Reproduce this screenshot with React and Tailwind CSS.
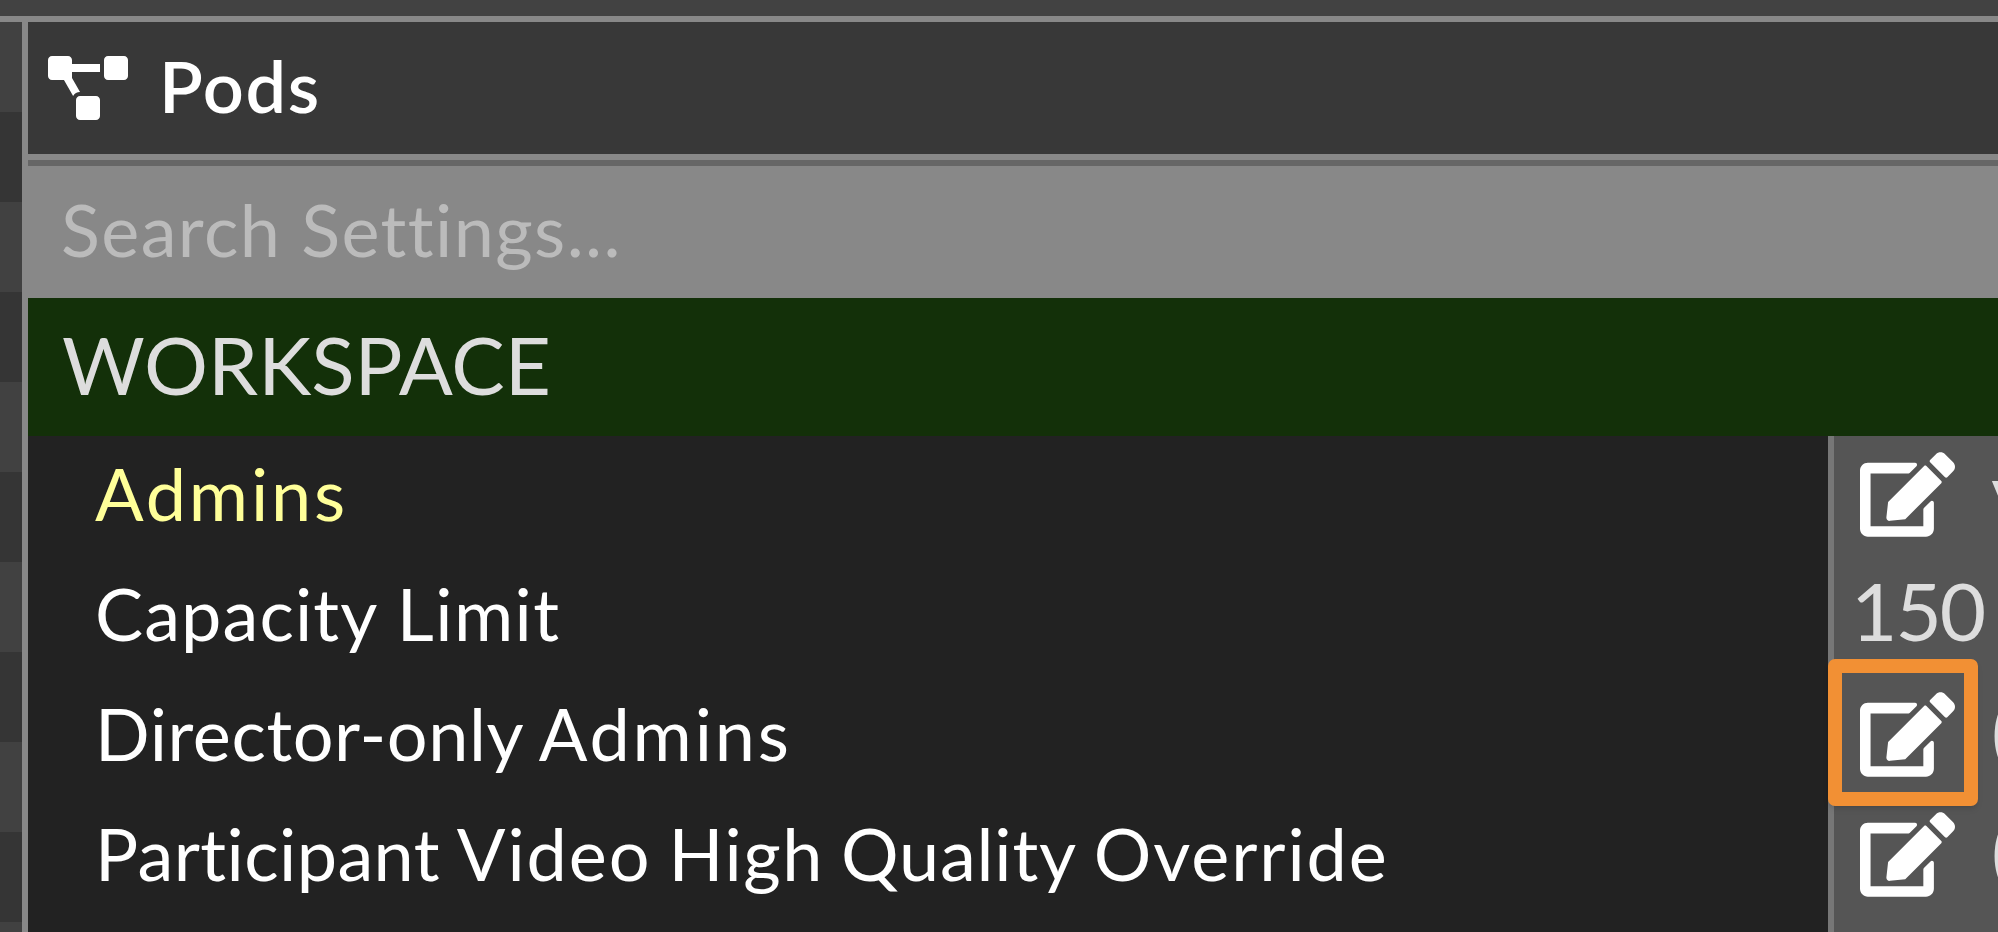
import React from 'react';
import { FaEdit, FaProjectDiagram } from 'react-icons/fa';

const settings = [
    {
        id: 'admins',
        value: 'v',
        editable: true,
        color: 'text-[#ffff99]',
        words: [{ text: 'Admins', tracking: 'tracking-[2.8px]' }],
    },
    {
        id: 'capacity',
        value: '150',
        color: 'text-white',
        words: [
            { text: 'Capacity', tracking: 'tracking-[1.1px]' },
            { text: 'Limit', tracking: 'tracking-[1.4px]' },
        ],
    },
    {
        id: 'director',
        value: '(',
        editable: true,
        highlighted: true,
        color: 'text-white [word-spacing:-4px]',
        words: [
            { text: 'Director-only', tracking: 'tracking-[0.6px]' },
            { text: 'Admins', tracking: 'tracking-[2.8px]' },
        ],
    },
    {
        id: 'override',
        value: '(',
        editable: true,
        color: 'text-white [word-spacing:-1.5px]',
        words: [
            { text: 'Participant', tracking: 'tracking-[0.4px]' },
            { text: 'Video', tracking: 'tracking-[1.9px]' },
            { text: 'High', tracking: 'tracking-[1.6px]' },
            { text: 'Quality', tracking: 'tracking-[0.8px]' },
            { text: 'Override', tracking: 'tracking-[1.9px]' },
        ],
    },
];

const SettingLabel = ({ words, color }) => (
    <span className={`ml-[67px] whitespace-nowrap text-[72px] leading-[114px] ${color}`}>
        {words.map((word, i) => (
            <React.Fragment key={word.text}>
                {i > 0 && ' '}
                <span className={word.tracking}>{word.text}</span>
            </React.Fragment>
        ))}
    </span>
);

const SettingRow = ({ setting }) => (
    <div className="flex h-[120px] shrink-0">
        <div className="flex w-[1800px] shrink-0 items-start bg-[#222222]">
            <SettingLabel words={setting.words} color={setting.color} />
        </div>
        <div className="relative flex flex-1 items-start border-l-[6px] border-[#777777] bg-[#555555]">
            {setting.editable && <FaEdit className="ml-[26px] mt-4 h-[85px] w-[95px] shrink-0 text-white" />}
            <span className={`whitespace-nowrap text-[80px] leading-[108px] text-[#dddddd] ${setting.editable ? 'ml-[36px]' : 'ml-[17px] tracking-[-2px]'}`}>
                {setting.value}
            </span>
            {setting.highlighted && (
                <div className="absolute -left-[6px] -top-[17px] z-10 h-[147px] w-[150px] rounded-[7px] border-[14px] border-[#f29034] shadow-md" />
            )}
        </div>
    </div>
);

const Sidebar = () => (
    <div className="w-[22px] shrink-0 bg-[#414141] pt-[90px]">
        {[0, 1, 2, 3, 4].map(stripe => (
            <div key={stripe} className="mb-[90px] h-[90px] bg-[#353535]" />
        ))}
    </div>
);

const App = () => (
    <div className="flex h-[932px] w-[1998px] flex-col overflow-hidden bg-[#424242] pt-4 font-['Lato',sans-serif]">
        <div className="flex min-h-0 flex-1 border-t-[6px] border-[#888888]">
            <Sidebar />
            <div className="flex min-w-0 flex-1 flex-col overflow-hidden border-l-[6px] border-[#888888]">
                <div className="flex h-[138px] shrink-0 items-start border-b-[6px] border-[#888888] bg-[#383838]">
                    <FaProjectDiagram className="ml-5 mt-[34px] h-16 w-20 text-white" />
                    <h1 className="ml-[31px] text-[72px] font-semibold leading-[126px] tracking-[1.6px] text-white">Pods</h1>
                </div>
                <div className="flex h-[138px] shrink-0 border-t-[6px] border-[#666666] bg-[#888888]">
                    <span className="ml-[33px] text-[72px] leading-[126px] tracking-[1.4px] text-[#bbbbbb]">Search Settings...</span>
                </div>
                <div className="flex h-[138px] shrink-0 bg-[#133009]">
                    <span className="ml-[34px] text-[80px] leading-[132px] text-[#dddddd]">WORKSPACE</span>
                </div>
                {settings.map(setting => (
                    <SettingRow key={setting.id} setting={setting} />
                ))}
                {/* columns continue below the last setting */}
                <div className="flex flex-1">
                    <div className="w-[1800px] shrink-0 bg-[#222222]" />
                    <div className="flex-1 border-l-[6px] border-[#777777] bg-[#555555]" />
                </div>
            </div>
        </div>
    </div>
);

export default App;
